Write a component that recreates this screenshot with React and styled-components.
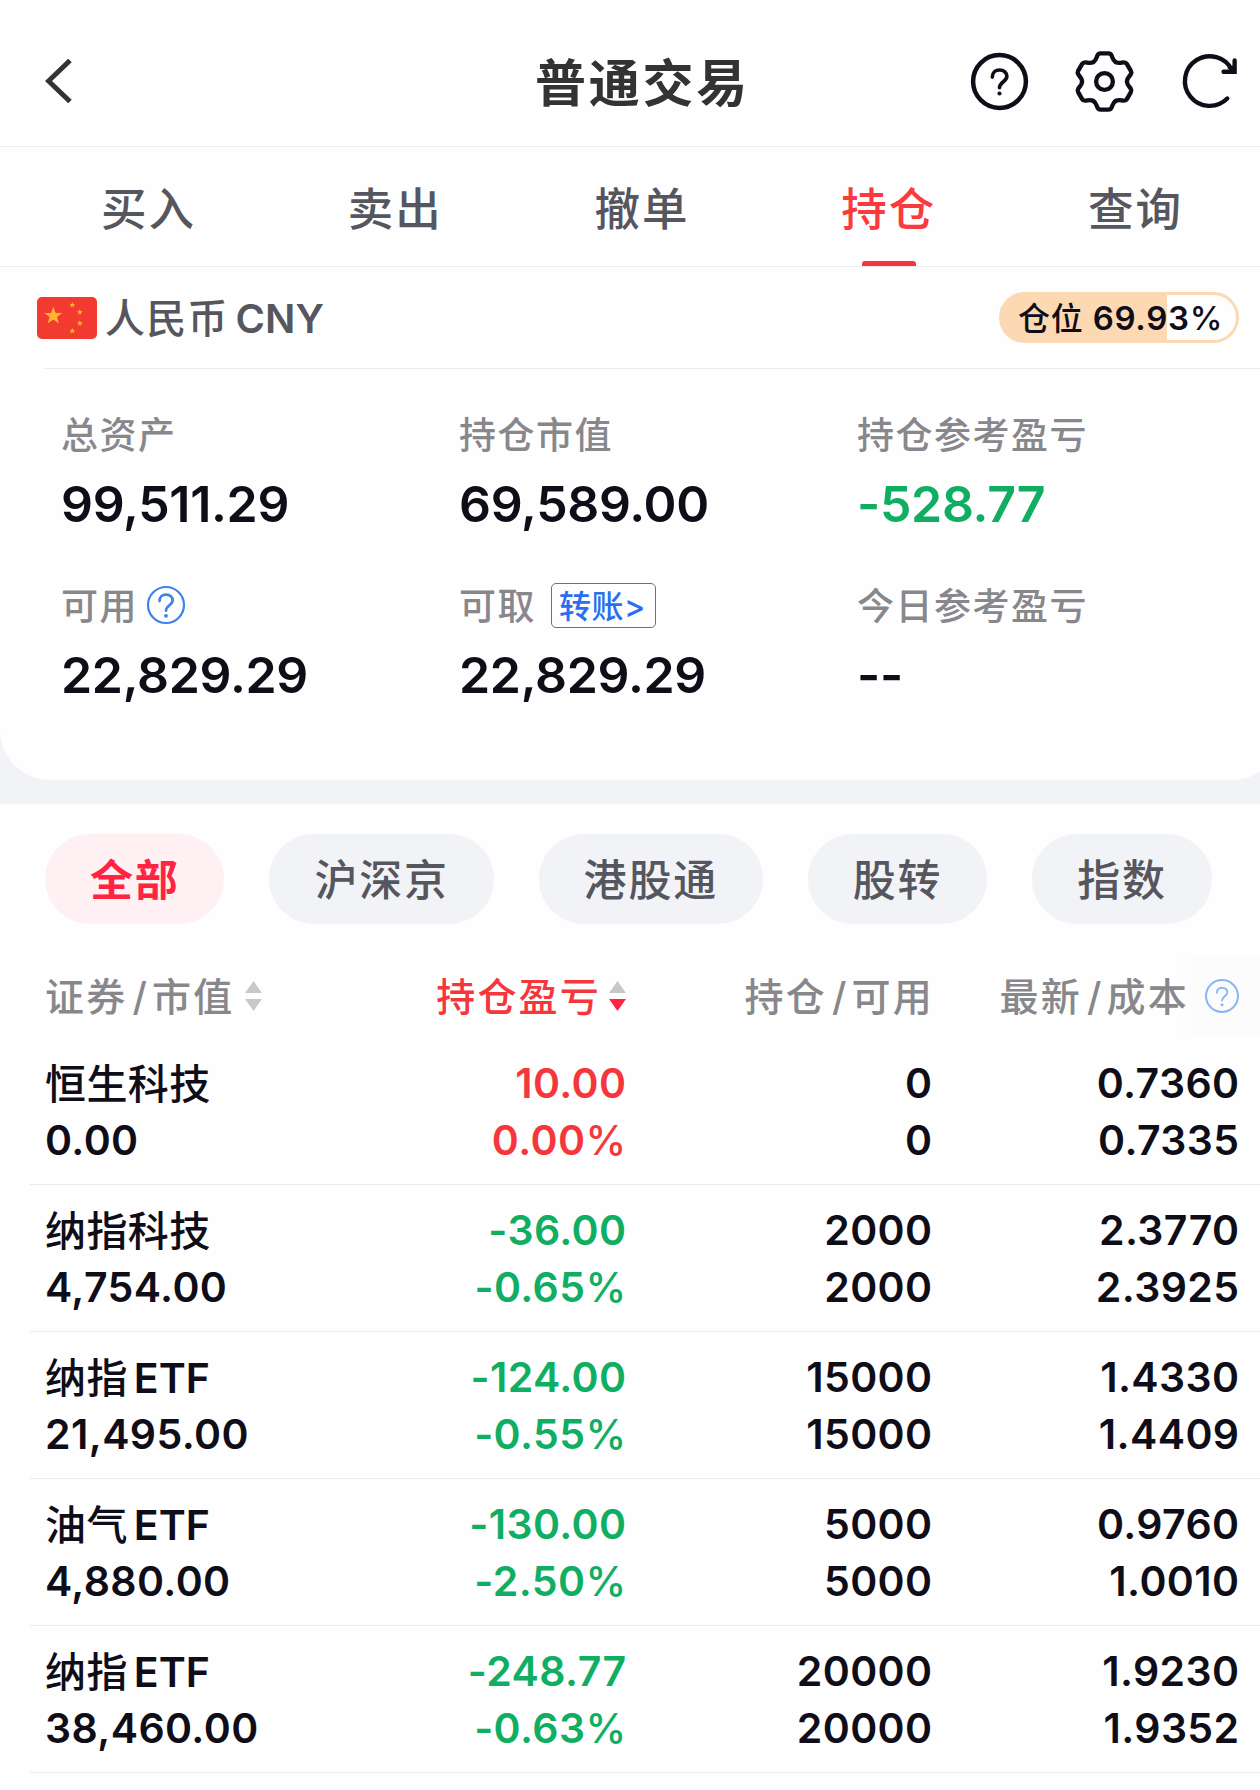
import React from 'react';
import styled, { createGlobalStyle } from 'styled-components';

const GlobalStyle = createGlobalStyle`
    * {
        box-sizing: border-box;
    }
    body {
        margin: 0;
        background: #fefefe;
        color: #0f0d17;
        font-family: Inter, "Noto Sans CJK SC", sans-serif;
        font-weight: 500;
    }
`;
const Page = styled.div`
    width: 1260px;
    height: 1790px;
    overflow: hidden;
`;
const Header = styled.header`
    display: grid;
    grid-template-columns: 1fr auto 1fr;
    align-items: center;
    height: 147px;
    padding: 16px 17px 0 45px;
    border-bottom: 1px solid #ebebeb;
    svg {
        display: block;
    }
`;
const Title = styled.h1`
    margin: 0;
    padding: 5px 3px 0 0;
    color: #333;
    font-size: 51px;
    font-weight: 700;
    letter-spacing: 2.8px;
    line-height: 60px;
`;
const HeaderActions = styled.div`
    display: flex;
    justify-content: flex-end;
    gap: 38px;
`;
const Tabs = styled.nav`
    display: flex;
    height: 120px;
    padding: 0 1px 0 25px;
    border-bottom: 1px solid #ebebeb;
`;
const Tab = styled.div`
    display: flex;
    flex: 1;
    flex-direction: column;
    justify-content: space-between;
    align-items: center;
    padding-top: 33px;
    color: ${({ $active }) => $active ? '#fa3a3c' : '#56565f'};
    font-size: 45.5px;
    letter-spacing: 2px;
    line-height: 60px;
    &::after {
        content: '';
        width: 54px;
        height: 5px;
        border-radius: 3px 3px 0 0;
        background: ${({ $active }) => $active ? '#f5373b' : 'transparent'};
    }
`;
const Panel = styled.section`
    background: #f2f3f7;
    padding-bottom: 24px;
`;
const PanelBody = styled.div`
    width: 1282px;
    height: 513px;
    border-radius: 0 0 50px 50px;
    background: #fefefe;
`;
const CurrencyRow = styled.div`
    display: flex;
    align-items: center;
    width: 1239px;
    height: 101px;
    padding-left: 37px;
`;
const CurrencyName = styled.div`
    flex: 1;
    padding: 2px 0 0 8px;
    color: #56565f;
    font-size: 40px;
    letter-spacing: 1.2px;
    line-height: 60px;
`;
const CurrencyCode = styled.span`
    margin-left: 7px;
    font-weight: 600;
    letter-spacing: 0;
`;
const Divider = styled.div`
    height: 1px;
    margin-left: 45px;
    background: #ebebeb;
`;
const PositionBadge = styled.div`
    width: 240px;
    height: 51px;
    border: 3px solid #fcd9b2;
    border-radius: 26px;
    padding-left: 16px;
    background: linear-gradient(to right, #fcd9b2 ${({ $percent }) => $percent}%, #fefefe 0) border-box;
    font-size: 32px;
    letter-spacing: 0.7px;
    line-height: 46px;
    white-space: nowrap;
`;
const BadgeValue = styled.span`
    font-size: 33px;
    font-weight: 600;
`;
const Assets = styled.div`
    display: grid;
    grid-template-columns: repeat(3, 398px);
    row-gap: 31px;
    padding: 35px 0 0 61px;
`;
const AssetLabel = styled.div`
    display: flex;
    align-items: center;
    height: 60px;
    color: #88888c;
    font-size: 37px;
    letter-spacing: 1.5px;
`;
const LabelText = styled.span`
    margin-top: -2px;
`;
const AssetValue = styled.div`
    height: 80px;
    color: ${({ $color }) => $color || 'inherit'};
    font-size: 50px;
    font-weight: 570;
    letter-spacing: -0.3px;
    line-height: 80px;
`;
const HelpSlot = styled.span`
    display: flex;
    margin-left: ${({ $gap = 8 }) => $gap}px;
`;
const TransferButton = styled.button`
    width: 105px;
    height: 45px;
    margin-left: 15px;
    padding: 2px 2px 0 0;
    border: 1px solid #3f74da;
    border-radius: 5px;
    background: none;
    color: #2b6ff0;
    font: 500 32px/42px Inter, "Noto Sans CJK SC", sans-serif;
    letter-spacing: 0.6px;
    white-space: nowrap;
`;
const Filters = styled.div`
    display: flex;
    gap: 45px;
    padding: 30px 0 0 45px;
`;
const Chip = styled.div`
    height: 90px;
    padding: 1px 44.8px 0 45px;
    border-radius: 45px;
    background: ${({ $active }) => $active ? '#fff0f3' : '#f2f3f7'};
    color: ${({ $active }) => $active ? '#ff2442' : '#56565f'};
    font-size: 43px;
    font-weight: ${({ $active }) => $active ? 700 : 500};
    letter-spacing: 1.8px;
    line-height: 91px;
    white-space: nowrap;
`;
const TableHead = styled.div`
    display: grid;
    grid-template-columns: 281px 300px 308px 326px;
    height: 82px;
    margin-top: 32px;
    padding-left: 45px;
`;
const HeadCell = styled.div`
    display: flex;
    align-items: center;
    justify-content: ${({ $left }) => $left ? 'flex-start' : 'flex-end'};
    padding-right: ${({ $last }) => $last ? '20px' : 0};
    padding-bottom: 2px;
    color: ${({ $active }) => $active ? '#f5373b' : '#88888c'};
    background: ${({ $last }) => $last ? 'linear-gradient(to right, transparent 74%, #fcfcfc 80%)' : 'none'};
    font-size: 39px;
    letter-spacing: 2.2px;
    line-height: 78px;
    white-space: nowrap;
    svg {
        flex: none;
    }
`;
const HeadText = styled.span`
    margin-top: 2px;
`;
const Slash = styled.span`
    padding: 0 3px 0 5px;
`;
const Row = styled.div`
    display: grid;
    grid-template-columns: 281.5px 300px 306px 307px;
    height: 147px;
    margin-left: 30px;
    padding: 17px 0 0 15px;
    border-bottom: 1px solid #ebebeb;
`;
const Cell = styled.div`
    color: ${({ $color }) => $color || 'inherit'};
    font-size: 41px;
    font-weight: 570;
    letter-spacing: 0.4px;
    line-height: 57px;
    text-align: ${({ $left }) => $left ? 'left' : 'right'};
    white-space: nowrap;
`;
const StockName = styled.div`
    position: relative;
    top: 1px;
    font-weight: 500;
`;
const Latin = styled.span`
    margin-left: 6px;
    font-weight: 570;
    letter-spacing: 0;
`;
const PercentSign = styled.span`
    font-weight: 450;
`;

const RED = '#f5373b';
const GREEN = '#0fae63';

const BackIcon = () =>
    <svg width="27" height="44" viewBox="0 0 27 44" fill="none" stroke="#333" strokeWidth="5">
        <path d="M25 1.5L3.5 22L25 42.5" />
    </svg>;

const HelpIcon = ({ size, ring, stroke = 4.5, markStroke = 3.6, scale = 1, color = '#0f0d17' }) =>
    <svg width={size} height={size} viewBox={`${-size / 2} ${-size / 2} ${size} ${size}`} fill="none" stroke={color} strokeLinecap="round">
        <circle r={ring} strokeWidth={stroke} />
        <g transform={`scale(${scale})`}>
            <path d="M-7.2 -4.4C-7.2 -9 -4 -11.5 0 -11.5C4.4 -11.5 7.4 -8.6 7.4 -5.2C7.4 0 0 .6 0 6.3" strokeWidth={markStroke} />
            <circle cy="12" r="2.1" fill={color} stroke="none" />
        </g>
    </svg>;

const GearIcon = () =>
    <svg width="67" height="67" viewBox="-100 -100 200 200" fill="none" stroke="#0f0d17" strokeWidth="13" strokeLinecap="round">
        {[0, 60, 120, 180, 240, 300].map(angle =>
            <path
                key={angle}
                transform={`rotate(${angle})`}
                d="M-33.5 -58C-24 -64 -24 -72 -21 -78Q-18 -84 -12 -84H12Q18 -84 21 -78C24 -72 24 -64 33.5 -58"
            />
        )}
        <circle r="25" />
    </svg>;

const RefreshIcon = () =>
    <svg width="67" height="67" viewBox="-100 -100 200 200" fill="none" stroke="#0f0d17" strokeWidth="13">
        <path d="M53 51A74 74 0 1 1 67 -34" strokeLinecap="round" />
        <path d="M75 -63V-29H42" strokeLinecap="round" />
        <path d="M52 -40L75 -29V-50Z" fill="#0f0d17" stroke="none" />
    </svg>;

const STAR = 'M0 -9.5L2.3 -3.1H9L3.7 .9L5.6 7.5L0 3.6L-5.6 7.5L-3.7 .9L-9 -3.1H-2.3Z';

const Flag = () =>
    <svg width="60" height="42" viewBox="0 0 60 42">
        <rect width="60" height="42" rx="5" fill="#f23a30" />
        <g fill="#ffb52e">
            <path d={STAR} transform="translate(16.3 19)" />
            <path d={STAR} transform="translate(35.3 8) scale(.34)" />
            <path d={STAR} transform="translate(42.8 15.3) scale(.34)" />
            <path d={STAR} transform="translate(42.8 26.4) scale(.34)" />
            <path d={STAR} transform="translate(35.3 34) scale(.34)" />
        </g>
    </svg>;

const SortIcon = ({ down = '#c8c8c8' }) =>
    <svg width="17" height="30" viewBox="0 0 17 30">
        <path d="M8.5 0L17 12H0Z" fill="#c8c8c8" />
        <path d="M8.5 30L17 18H0Z" fill={down} />
    </svg>;

const tabs = ['买入', '卖出', '撤单', '持仓', '查询'];
const filters = ['全部', '沪深京', '港股通', '股转', '指数'];
const holdings = [
    { name: '恒生科技', value: '0.00', profit: '10.00', rate: '0.00', held: '0', usable: '0', price: '0.7360', cost: '0.7335', color: RED },
    { name: '纳指科技', value: '4,754.00', profit: '-36.00', rate: '-0.65', held: '2000', usable: '2000', price: '2.3770', cost: '2.3925', color: GREEN },
    { name: '纳指', suffix: 'ETF', value: '21,495.00', profit: '-124.00', rate: '-0.55', held: '15000', usable: '15000', price: '1.4330', cost: '1.4409', color: GREEN },
    { name: '油气', suffix: 'ETF', value: '4,880.00', profit: '-130.00', rate: '-2.50', held: '5000', usable: '5000', price: '0.9760', cost: '1.0010', color: GREEN },
    { name: '纳指', suffix: 'ETF', value: '38,460.00', profit: '-248.77', rate: '-0.63', held: '20000', usable: '20000', price: '1.9230', cost: '1.9352', color: GREEN },
];

const Asset = ({ label, value, color, children }) =>
    <div>
        <AssetLabel><LabelText>{label}</LabelText>{children}</AssetLabel>
        <AssetValue $color={color}>{value}</AssetValue>
    </div>;

const App = () =>
    <Page>
        <GlobalStyle />
        <Header>
            <BackIcon />
            <Title>{'普通交易'}</Title>
            <HeaderActions>
                <HelpIcon size={67} ring={26.4} />
                <GearIcon />
                <RefreshIcon />
            </HeaderActions>
        </Header>
        <Tabs>
            {tabs.map(tab => <Tab key={tab} $active={tab === '持仓'}>{tab}</Tab>)}
        </Tabs>
        <Panel>
            <PanelBody>
                <CurrencyRow>
                    <Flag />
                    <CurrencyName>{'人民币'}<CurrencyCode>{'CNY'}</CurrencyCode></CurrencyName>
                    <PositionBadge $percent={69.93}>
                        {'仓位 '}<BadgeValue>{'69.93'}<PercentSign>{'%'}</PercentSign></BadgeValue>
                    </PositionBadge>
                </CurrencyRow>
                <Divider />
                <Assets>
                    <Asset label="总资产" value="99,511.29" />
                    <Asset label="持仓市值" value="69,589.00" />
                    <Asset label="持仓参考盈亏" value="-528.77" color={GREEN} />
                    <Asset label="可用" value="22,829.29">
                        <HelpSlot><HelpIcon size={40} ring={18} stroke={2.2} markStroke={3} scale={0.9} color="#3f83ea" /></HelpSlot>
                    </Asset>
                    <Asset label="可取" value="22,829.29">
                        <TransferButton>{'转账>'}</TransferButton>
                    </Asset>
                    <Asset label="今日参考盈亏" value="--" />
                </Assets>
            </PanelBody>
        </Panel>
        <Filters>
            {filters.map(filter => <Chip key={filter} $active={filter === '全部'}>{filter}</Chip>)}
        </Filters>
        <TableHead>
            <HeadCell $left>
                <HeadText>{'证券'}<Slash>/</Slash>{'市值'}</HeadText>
                <HelpSlot $gap={11}><SortIcon /></HelpSlot>
            </HeadCell>
            <HeadCell $active>
                <HeadText>{'持仓盈亏'}</HeadText>
                <HelpSlot><SortIcon down="#ff2442" /></HelpSlot>
            </HeadCell>
            <HeadCell><HeadText>{'持仓'}<Slash>/</Slash>{'可用'}</HeadText></HeadCell>
            <HeadCell $last>
                <HeadText>{'最新'}<Slash>/</Slash>{'成本'}</HeadText>
                <HelpSlot $gap={15}><HelpIcon size={36} ring={16} stroke={2} markStroke={2.6} scale={0.72} color="#8ab6f5" /></HelpSlot>
            </HeadCell>
        </TableHead>
        {holdings.map((item, index) =>
            <Row key={index}>
                <Cell $left>
                    <StockName>{item.name}{item.suffix && <Latin>{item.suffix}</Latin>}</StockName>
                    {item.value}
                </Cell>
                <Cell $color={item.color}>{item.profit}<br />{item.rate}<PercentSign>{'%'}</PercentSign></Cell>
                <Cell>{item.held}<br />{item.usable}</Cell>
                <Cell>{item.price}<br />{item.cost}</Cell>
            </Row>
        )}
    </Page>;
export default App;
